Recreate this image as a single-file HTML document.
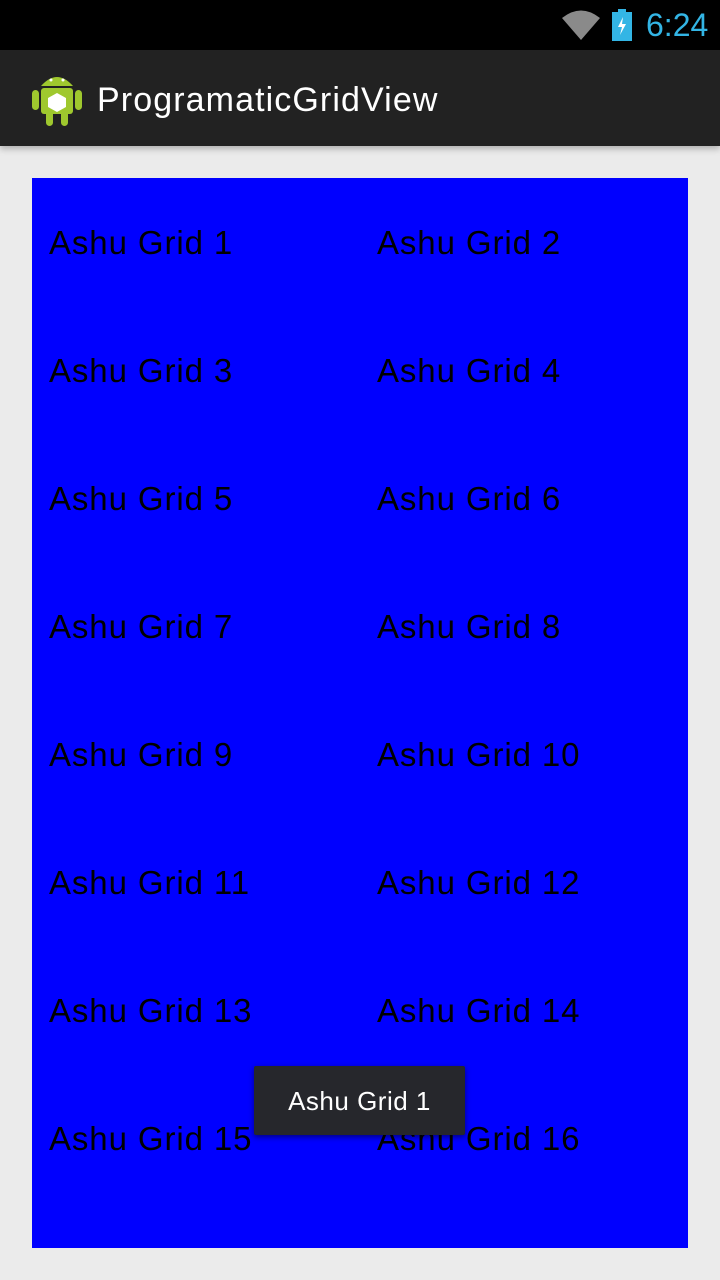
<!DOCTYPE html>
<html><head><style>
body{margin:0;width:720px;height:1280px;overflow:hidden;background:#ebebeb;font-family:"Liberation Sans",sans-serif;position:relative}
.sb{position:absolute;left:0;top:0;width:720px;height:50px;background:#000}
.ab{position:absolute;left:0;top:50px;width:720px;height:96px;background:#222;box-shadow:0 3px 6px rgba(0,0,0,.25)}
.grid{position:absolute;left:32px;top:178px;width:656px;height:1070px;background:#0000ff}
.c{position:absolute;font-size:33px;color:#000;line-height:40px;white-space:nowrap;letter-spacing:0.9px}
.toast{position:absolute;left:254px;top:1066px;width:211px;height:69px;background:#26272c;border-radius:2px;color:#fff;font-size:26px;line-height:71px;text-align:center;box-shadow:0 2px 6px rgba(0,0,0,.5);letter-spacing:0.5px}
</style></head><body>
<div class="sb">
<svg style="position:absolute;left:561px;top:9px" width="40" height="32" viewBox="0 0 40 32"><path d="M20 31 L1 9 Q20 -6 39 9 Z" fill="#8a8a8a"/></svg>
<svg style="position:absolute;left:611px;top:9px" width="22" height="32" viewBox="0 0 22 32"><rect x="7" y="0" width="8" height="3" fill="#33b5e5"/><rect x="1" y="3" width="20" height="29" fill="#33b5e5"/><path d="M12 8 L7 18 L11 18 L9 26 L15 15 L11 15 Z" fill="#fff"/></svg>
<div style="position:absolute;left:646px;top:5px;color:#33b5e5;font-size:32px;line-height:40px">6:24</div>
</div>
<div class="ab">
<svg style="position:absolute;left:32px;top:20px" width="50" height="56" viewBox="0 0 50 56"><g fill="#9fc82e"><rect x="0" y="20" width="7" height="20" rx="3.5"/><rect x="43" y="20" width="7" height="20" rx="3.5"/><path d="M9 16 Q25 -2 41 16 Z"/><rect x="9" y="18" width="32" height="26" rx="3"/><rect x="14" y="40" width="7" height="16" rx="3.5"/><rect x="29" y="40" width="7" height="16" rx="3.5"/></g><path d="M25 23 L34 28 L34 37 L25 42 L16 37 L16 28 Z" fill="#fff"/><circle cx="19" cy="10" r="1.5" fill="#fff"/><circle cx="31" cy="10" r="1.5" fill="#fff"/></svg>
<div style="position:absolute;left:97px;top:28px;color:#fff;font-size:34px;line-height:44px;letter-spacing:1.1px">ProgramaticGridView</div>
</div>
<div class="grid">
<div class="c" style="left:17px;top:45px">Ashu Grid 1</div><div class="c" style="left:345px;top:45px">Ashu Grid 2</div>
<div class="c" style="left:17px;top:173px">Ashu Grid 3</div><div class="c" style="left:345px;top:173px">Ashu Grid 4</div>
<div class="c" style="left:17px;top:301px">Ashu Grid 5</div><div class="c" style="left:345px;top:301px">Ashu Grid 6</div>
<div class="c" style="left:17px;top:429px">Ashu Grid 7</div><div class="c" style="left:345px;top:429px">Ashu Grid 8</div>
<div class="c" style="left:17px;top:557px">Ashu Grid 9</div><div class="c" style="left:345px;top:557px">Ashu Grid 10</div>
<div class="c" style="left:17px;top:685px">Ashu Grid 11</div><div class="c" style="left:345px;top:685px">Ashu Grid 12</div>
<div class="c" style="left:17px;top:813px">Ashu Grid 13</div><div class="c" style="left:345px;top:813px">Ashu Grid 14</div>
<div class="c" style="left:17px;top:941px">Ashu Grid 15</div><div class="c" style="left:345px;top:941px">Ashu Grid 16</div>
</div>
<div class="toast">Ashu Grid 1</div>
</body></html>
